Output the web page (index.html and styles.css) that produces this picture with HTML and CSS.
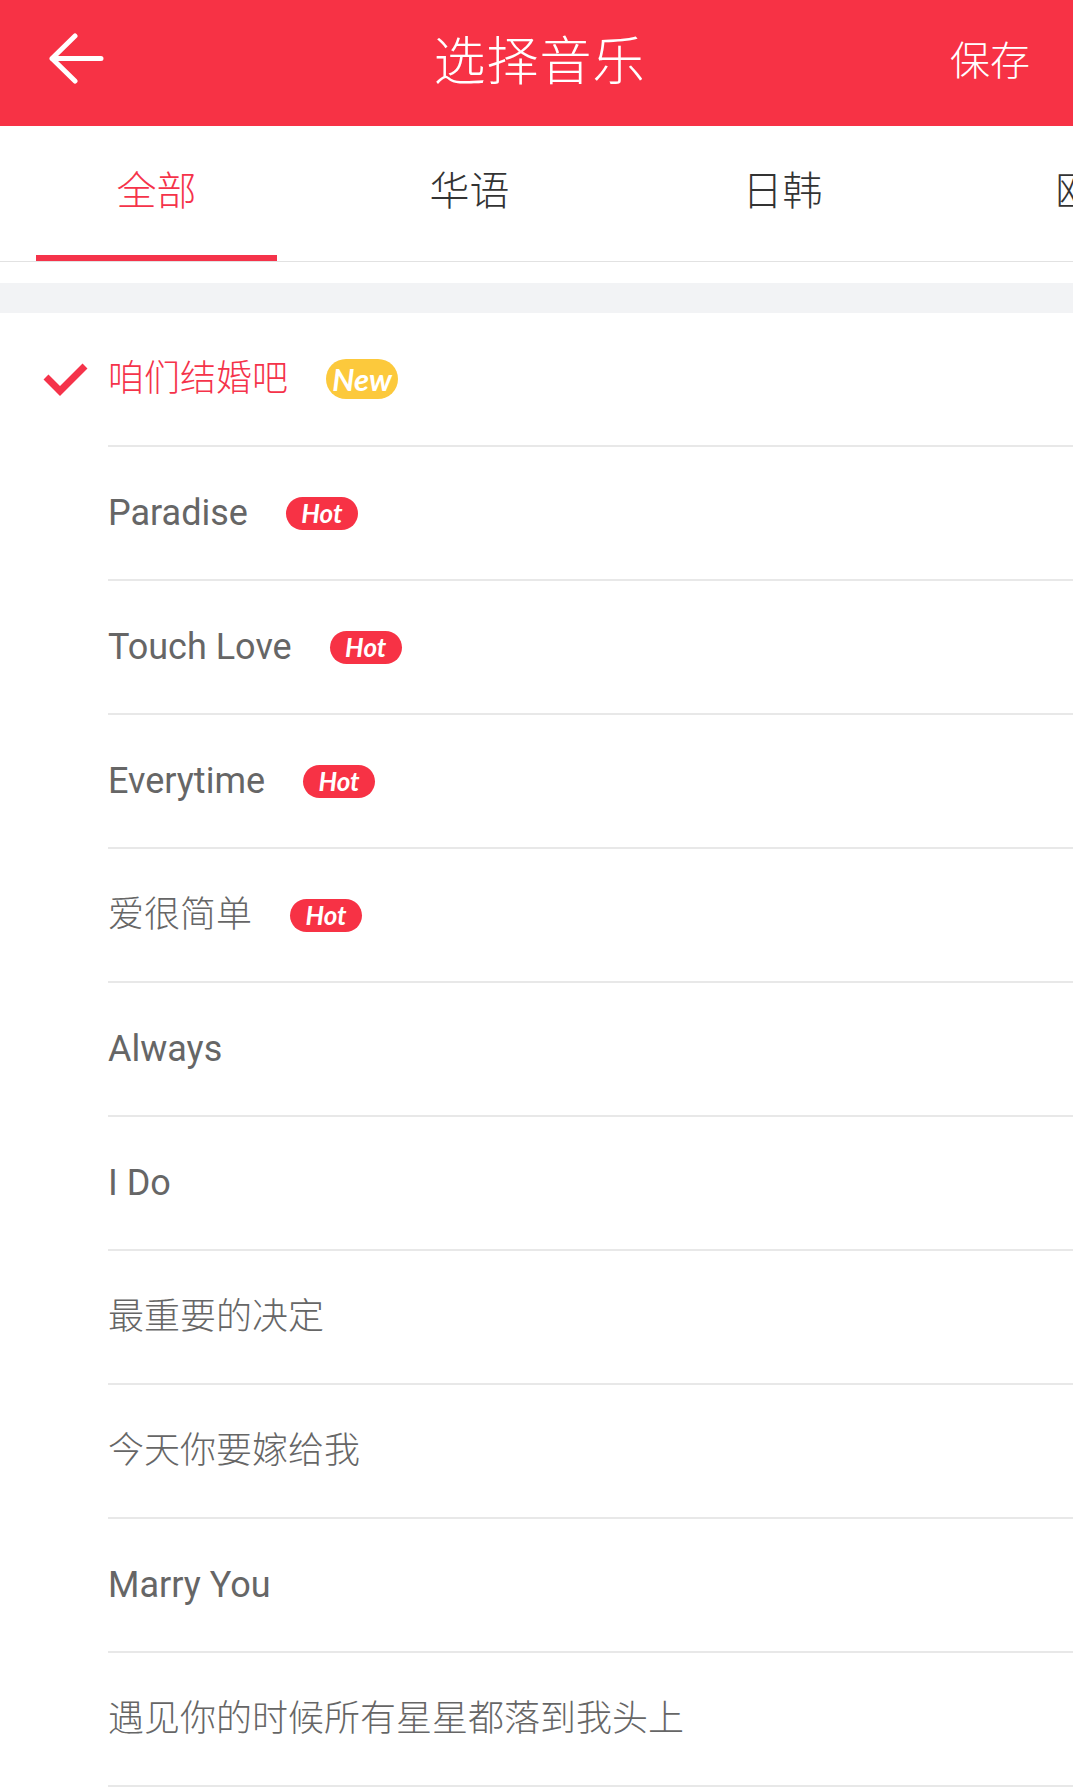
FILE: index.html
```html
<!DOCTYPE html>
<html lang="zh-CN">
<head>
    <meta charset="UTF-8">
    <meta name="viewport" content="width=device-width, initial-scale=1.0">
    <title>选择音乐</title>
    <link rel="stylesheet" href="styles.css">
</head>
<body>
    <div class="header">
        <div class="back">
            <svg width="56" height="52" viewBox="0 0 56 52">
                <path d="M26 4 L3 26.5 L26 49 M3 26.5 L52 26.5" fill="none" stroke="#fff" stroke-width="5" stroke-linecap="round" stroke-linejoin="round"/>
            </svg>
        </div>
        <h1>选择音乐</h1>
        <div class="save">保存</div>
    </div>

    <div class="tabs">
        <div class="tab active">全部</div>
        <div class="tab">华语</div>
        <div class="tab">日韩</div>
        <div class="tab">欧美</div>
    </div>

    <div class="band"></div>

    <ul class="songs">
        <li class="song selected">
            <div class="mark">
                <svg width="50" height="40" viewBox="0 0 50 40">
                    <polyline points="6,17 20,31 45,6" fill="none" stroke="#f5334a" stroke-width="7" stroke-linejoin="miter"/>
                </svg>
            </div>
            <div class="body"><span class="name cjk">咱们结婚吧</span><span class="badge new">New</span></div>
        </li>
        <li class="song">
            <div class="mark"></div>
            <div class="body"><span class="name">Paradise</span><span class="badge hot">Hot</span></div>
        </li>
        <li class="song">
            <div class="mark"></div>
            <div class="body"><span class="name">Touch Love</span><span class="badge hot">Hot</span></div>
        </li>
        <li class="song">
            <div class="mark"></div>
            <div class="body"><span class="name">Everytime</span><span class="badge hot">Hot</span></div>
        </li>
        <li class="song">
            <div class="mark"></div>
            <div class="body"><span class="name cjk">爱很简单</span><span class="badge hot">Hot</span></div>
        </li>
        <li class="song">
            <div class="mark"></div>
            <div class="body"><span class="name">Always</span></div>
        </li>
        <li class="song">
            <div class="mark"></div>
            <div class="body"><span class="name">I Do</span></div>
        </li>
        <li class="song">
            <div class="mark"></div>
            <div class="body"><span class="name cjk">最重要的决定</span></div>
        </li>
        <li class="song">
            <div class="mark"></div>
            <div class="body"><span class="name cjk">今天你要嫁给我</span></div>
        </li>
        <li class="song">
            <div class="mark"></div>
            <div class="body"><span class="name">Marry You</span></div>
        </li>
        <li class="song">
            <div class="mark"></div>
            <div class="body"><span class="name cjk">遇见你的时候所有星星都落到我头上</span></div>
        </li>
    </ul>
</body>
</html>
```

FILE: styles.css
```css
body {
    margin: 0;
    padding: 0;
    height: 1792px;
    overflow: hidden;
    background: #ffffff;
    font-family: Roboto, "Noto Sans CJK SC", sans-serif;
    color: #666666;
}
.header {
    height: 126px;
    box-sizing: border-box;
    background: #f73245;
    display: grid;
    grid-template-columns: 1fr auto 1fr;
    align-items: center;
    padding: 0 43px 10px 49px;
    color: #ffffff;
    font-family: "Noto Sans CJK SC", sans-serif;
    font-weight: 300;
}
.back {
    display: flex;
    align-items: center;
}
.header h1 {
    margin: 0;
    font-size: 52px;
    font-weight: 300;
    line-height: 52px;
    letter-spacing: 1px;
}
.save {
    justify-self: end;
    font-size: 40px;
    line-height: 40px;
}
.tabs {
    display: flex;
    overflow: hidden;
    height: 136px;
    box-sizing: border-box;
    border-bottom: 1px solid #e2e2e2;
    font-family: "Noto Sans CJK SC", sans-serif;
    font-weight: 300;
}
.tab {
    flex: 0 0 313px;
    position: relative;
    display: flex;
    align-items: center;
    justify-content: center;
    padding-bottom: 12px;
    font-size: 40px;
    line-height: 40px;
    color: #333333;
}
.tab.active {
    color: #f5334a;
}
.tab.active::after {
    content: "";
    position: absolute;
    left: 36px;
    right: 36px;
    bottom: 0;
    height: 6px;
    background: #f5334a;
}
.band {
    height: 30px;
    margin-top: 21px;
    background: #f2f3f5;
}
.songs {
    list-style: none;
    margin: 0;
    padding: 0;
}
.song {
    display: flex;
    height: 134px;
}
.mark {
    flex: 0 0 108px;
    display: flex;
    align-items: center;
    padding-left: 40px;
    box-sizing: border-box;
}
.body {
    flex: 1;
    display: flex;
    align-items: center;
    gap: 38px;
    border-bottom: 2px solid #e8e8e8;
}
.name {
    font-size: 36px;
    line-height: 40px;
}
.name.cjk {
    font-weight: 300;
}
.song.selected .name {
    color: #f5334a;
}
.badge {
    display: flex;
    align-items: center;
    justify-content: center;
    width: 72px;
    color: #ffffff;
    font-family: Lato, sans-serif;
    font-weight: 700;
    font-style: italic;
}
.badge.new {
    height: 40px;
    border-radius: 20px;
    background: #fcc93c;
    font-size: 31px;
}
.badge.hot {
    height: 33px;
    border-radius: 17px;
    background: #f73245;
    font-size: 26px;
}
```
